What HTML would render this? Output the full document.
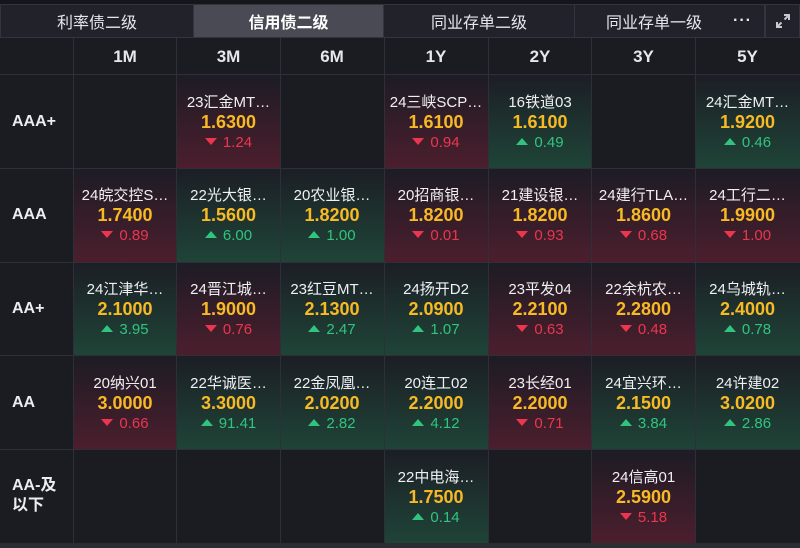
<!DOCTYPE html>
<html><head><meta charset="utf-8"><style>
*{margin:0;padding:0;box-sizing:border-box}
body{width:800px;height:548px;background:#1b1b22;font-family:"Liberation Sans","Noto Sans CJK SC",sans-serif;color:#e8e8ee;position:relative;overflow:hidden}
.abs{position:absolute}
.tab{position:absolute;top:4px;height:34px;background:#22222a;border:1px solid #34343e;display:flex;align-items:center;justify-content:center;font-size:16px;color:#e6e6ec}
.tab.act{background:#4a4a55;font-weight:bold;color:#fff}
.vl{position:absolute;top:38px;width:1px;height:506px;background:#2f2f39}
.hl{position:absolute;left:0;width:800px;height:1px;background:#2f2f39}
.hd{position:absolute;top:38px;height:37px;display:flex;align-items:center;justify-content:center;font-weight:bold;font-size:17px;color:#e6e6ec}
.rl{position:absolute;left:12px;font-weight:bold;font-size:16px;color:#ececf2;line-height:20px}
.c{position:absolute;display:flex;flex-direction:column;align-items:center;justify-content:center;padding-top:1px}
.c.r{background:linear-gradient(#1f1c25 5%,#4c1e2d)}
.c.g{background:linear-gradient(#1c2026 5%,#1f4437)}
.n{font-size:15px;line-height:19px;color:#f0f0f4;white-space:nowrap}
.v{font-size:18px;font-weight:bold;line-height:21px;color:#f7b924}
.d{font-size:15px;line-height:19px;white-space:nowrap}
.r .d{color:#ee3550}.g .d{color:#30c57f}
.r .d:before{content:"";display:inline-block;width:0;height:0;border-left:6px solid transparent;border-right:6px solid transparent;border-top:7px solid #ee3550;margin-right:6px;vertical-align:2px}
.g .d:before{content:"";display:inline-block;width:0;height:0;border-left:6px solid transparent;border-right:6px solid transparent;border-bottom:7px solid #30c57f;margin-right:6px;vertical-align:2px}
</style></head><body>
<div class="abs" style="left:0;top:0;width:800px;height:4px;background:#15151b"></div>
<div class="tab" style="left:0;width:194px">利率债二级</div>
<div class="tab act" style="left:193px;width:191px">信用债二级</div>
<div class="tab" style="left:383px;width:192px">同业存单二级</div>
<div class="tab" style="left:574px;width:191px;justify-content:flex-start;padding-left:31px">同业存单一级<span style="position:absolute;right:12px;font-weight:bold;letter-spacing:1px">···</span></div>
<div class="tab" style="left:765px;width:35px"><svg width="16" height="16" viewBox="0 0 16 16"><path d="M9 2h5v5M14 2L9.5 6.5M7 14H2V9M2 14l4.5-4.5" stroke="#c8c8d0" stroke-width="2" fill="none"/></svg></div>

<div class="hd" style="left:73px;width:104px">1M</div>
<div class="hd" style="left:177px;width:103px">3M</div>
<div class="hd" style="left:280px;width:104px">6M</div>
<div class="hd" style="left:384px;width:104px">1Y</div>
<div class="hd" style="left:488px;width:104px">2Y</div>
<div class="hd" style="left:592px;width:103px">3Y</div>
<div class="hd" style="left:695px;width:105px">5Y</div>

<div class="rl" style="top:112px">AAA+</div>
<div class="rl" style="top:205px">AAA</div>
<div class="rl" style="top:299px">AA+</div>
<div class="rl" style="top:393px">AA</div>
<div class="rl" style="top:476px">AA-及<br>以下</div>

<div class="c r" style="left:177px;top:75px;width:103px;height:93px"><div class="n">23汇金MT…</div><div class="v">1.6300</div><div class="d">1.24</div></div>
<div class="c r" style="left:384px;top:75px;width:104px;height:93px"><div class="n">24三峡SCP…</div><div class="v">1.6100</div><div class="d">0.94</div></div>
<div class="c g" style="left:488px;top:75px;width:104px;height:93px"><div class="n">16铁道03</div><div class="v">1.6100</div><div class="d">0.49</div></div>
<div class="c g" style="left:695px;top:75px;width:105px;height:93px"><div class="n">24汇金MT…</div><div class="v">1.9200</div><div class="d">0.46</div></div>

<div class="c r" style="left:73px;top:168px;width:104px;height:94px"><div class="n">24皖交控S…</div><div class="v">1.7400</div><div class="d">0.89</div></div>
<div class="c g" style="left:177px;top:168px;width:103px;height:94px"><div class="n">22光大银…</div><div class="v">1.5600</div><div class="d">6.00</div></div>
<div class="c g" style="left:280px;top:168px;width:104px;height:94px"><div class="n">20农业银…</div><div class="v">1.8200</div><div class="d">1.00</div></div>
<div class="c r" style="left:384px;top:168px;width:104px;height:94px"><div class="n">20招商银…</div><div class="v">1.8200</div><div class="d">0.01</div></div>
<div class="c r" style="left:488px;top:168px;width:104px;height:94px"><div class="n">21建设银…</div><div class="v">1.8200</div><div class="d">0.93</div></div>
<div class="c r" style="left:592px;top:168px;width:103px;height:94px"><div class="n">24建行TLA…</div><div class="v">1.8600</div><div class="d">0.68</div></div>
<div class="c r" style="left:695px;top:168px;width:105px;height:94px"><div class="n">24工行二…</div><div class="v">1.9900</div><div class="d">1.00</div></div>

<div class="c g" style="left:73px;top:262px;width:104px;height:94px"><div class="n">24江津华…</div><div class="v">2.1000</div><div class="d">3.95</div></div>
<div class="c r" style="left:177px;top:262px;width:103px;height:94px"><div class="n">24晋江城…</div><div class="v">1.9000</div><div class="d">0.76</div></div>
<div class="c g" style="left:280px;top:262px;width:104px;height:94px"><div class="n">23红豆MT…</div><div class="v">2.1300</div><div class="d">2.47</div></div>
<div class="c g" style="left:384px;top:262px;width:104px;height:94px"><div class="n">24扬开D2</div><div class="v">2.0900</div><div class="d">1.07</div></div>
<div class="c r" style="left:488px;top:262px;width:104px;height:94px"><div class="n">23平发04</div><div class="v">2.2100</div><div class="d">0.63</div></div>
<div class="c r" style="left:592px;top:262px;width:103px;height:94px"><div class="n">22余杭农…</div><div class="v">2.2800</div><div class="d">0.48</div></div>
<div class="c g" style="left:695px;top:262px;width:105px;height:94px"><div class="n">24乌城轨…</div><div class="v">2.4000</div><div class="d">0.78</div></div>

<div class="c r" style="left:73px;top:356px;width:104px;height:94px"><div class="n">20纳兴01</div><div class="v">3.0000</div><div class="d">0.66</div></div>
<div class="c g" style="left:177px;top:356px;width:103px;height:94px"><div class="n">22华诚医…</div><div class="v">3.3000</div><div class="d">91.41</div></div>
<div class="c g" style="left:280px;top:356px;width:104px;height:94px"><div class="n">22金凤凰…</div><div class="v">2.0200</div><div class="d">2.82</div></div>
<div class="c g" style="left:384px;top:356px;width:104px;height:94px"><div class="n">20连工02</div><div class="v">2.2000</div><div class="d">4.12</div></div>
<div class="c r" style="left:488px;top:356px;width:104px;height:94px"><div class="n">23长经01</div><div class="v">2.2000</div><div class="d">0.71</div></div>
<div class="c g" style="left:592px;top:356px;width:103px;height:94px"><div class="n">24宜兴环…</div><div class="v">2.1500</div><div class="d">3.84</div></div>
<div class="c g" style="left:695px;top:356px;width:105px;height:94px"><div class="n">24许建02</div><div class="v">3.0200</div><div class="d">2.86</div></div>

<div class="c g" style="left:384px;top:450px;width:104px;height:94px"><div class="n">22中电海…</div><div class="v">1.7500</div><div class="d">0.14</div></div>
<div class="c r" style="left:592px;top:450px;width:103px;height:94px"><div class="n">24信高01</div><div class="v">2.5900</div><div class="d">5.18</div></div>

<div class="vl" style="left:73px"></div>
<div class="vl" style="left:176px"></div>
<div class="vl" style="left:280px"></div>
<div class="vl" style="left:384px"></div>
<div class="vl" style="left:488px"></div>
<div class="vl" style="left:591px"></div>
<div class="vl" style="left:695px"></div>
<div class="hl" style="top:74px"></div>
<div class="hl" style="top:168px"></div>
<div class="hl" style="top:262px"></div>
<div class="hl" style="top:355px"></div>
<div class="hl" style="top:449px"></div>
<div class="abs" style="left:0;top:543px;width:800px;height:5px;background:#2c2c34"></div>
</body></html>
